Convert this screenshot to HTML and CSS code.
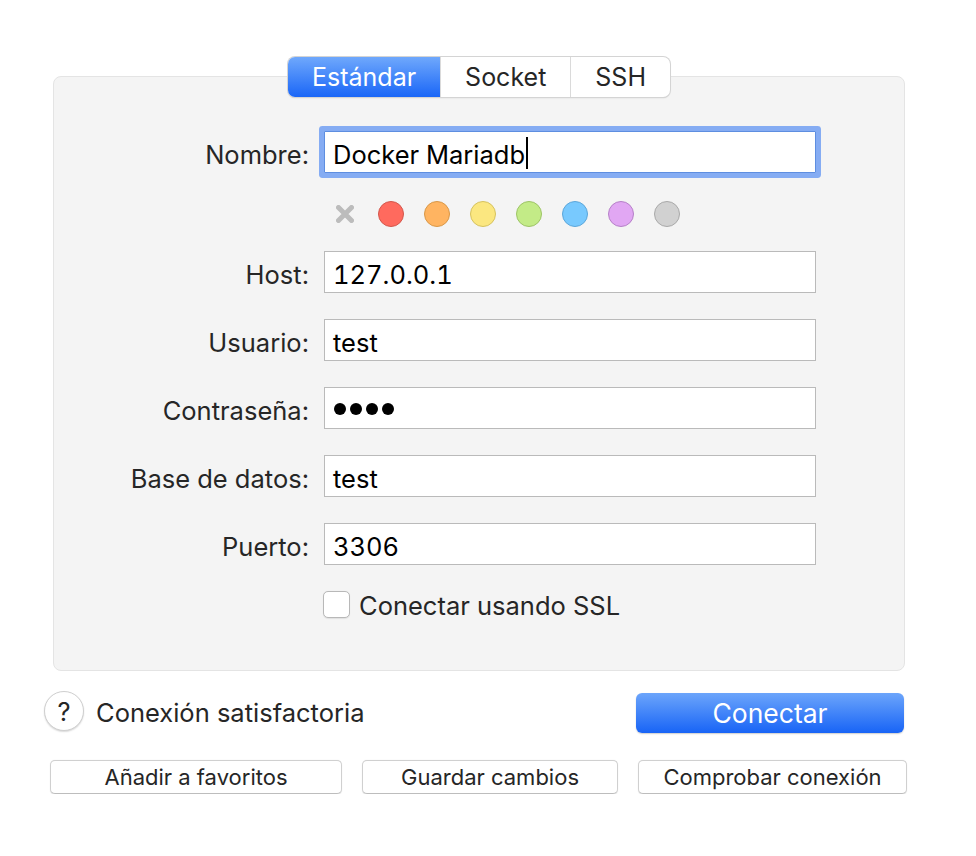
FILE: index.html
```html
<!DOCTYPE html>
<html lang="es">
<head>
<meta charset="utf-8">
<title>Conexión</title>
<link rel="stylesheet" href="styles.css">
</head>
<body>
<div class="window">
  <div class="tabs">
    <div class="tab active">Estándar</div>
    <div class="tab">Socket</div>
    <div class="tab">SSH</div>
  </div>
  <div class="panel">
    <div class="form">
      <div class="label">Nombre:</div>
      <div class="field focused">Docker Mariadb<span class="caret"></span></div>

      <div class="colors">
        <svg class="clear" width="18" height="18" viewBox="0 0 18 18"><path d="M2.5 2.5 L15.5 15.5 M15.5 2.5 L2.5 15.5" stroke="#bcbcbc" stroke-width="5" stroke-linecap="round"/></svg>
        <span class="swatch red"></span>
        <span class="swatch orange"></span>
        <span class="swatch yellow"></span>
        <span class="swatch green"></span>
        <span class="swatch blue"></span>
        <span class="swatch purple"></span>
        <span class="swatch gray"></span>
      </div>

      <div class="label">Host:</div>
      <div class="field">127.0.0.1</div>

      <div class="label">Usuario:</div>
      <div class="field">test</div>

      <div class="label">Contraseña:</div>
      <div class="field"><span class="dots"><span class="dot"></span><span class="dot"></span><span class="dot"></span><span class="dot"></span></span></div>

      <div class="label">Base de datos:</div>
      <div class="field">test</div>

      <div class="label">Puerto:</div>
      <div class="field">3306</div>

      <div class="check-row">
        <span class="checkbox"></span>
        <span class="check-label">Conectar usando SSL</span>
      </div>
    </div>
  </div>

  <div class="status-row">
    <div class="status">
      <span class="help">?</span>
      <span class="status-text">Conexión satisfactoria</span>
    </div>
    <div class="primary">Conectar</div>
  </div>

  <div class="button-row">
    <div class="button">Añadir a favoritos</div>
    <div class="button">Guardar cambios</div>
    <div class="button">Comprobar conexión</div>
  </div>
</div>
</body>
</html>
```

FILE: styles.css
```css
html, body {
  margin: 0;
  padding: 0;
  background: #ffffff;
}

body {
  font-family: Inter, "Liberation Sans", sans-serif;
  color: #262626;
}

.window {
  width: 870px;
  margin-left: 44px;
  padding-top: 57px;
  display: flex;
  flex-direction: column;
}

/* segmented control */
.tabs {
  align-self: center;
  display: flex;
  height: 40px;
  border-radius: 7px;
  background: #ffffff;
  box-shadow: 0 0 0 1px #d4d4d4, 0 1px 1.5px rgba(0, 0, 0, 0.18);
  position: relative;
  z-index: 1;
  overflow: hidden;
}

.tab {
  display: flex;
  align-items: center;
  justify-content: center;
  padding: 0 24px;
  font-size: 25px;
  color: #262626;
  border-left: 1px solid #dadada;
}

.tab:first-child {
  border-left: none;
}

.tab.active {
  background: linear-gradient(#6fa8fc, #1a66f7);
  color: #ffffff;
}

/* panel */
.panel {
  margin: -21px 9px 0 9px;
  background: #f4f4f4;
  border: 1px solid #e4e4e4;
  border-radius: 8px;
  padding: 54px 0 52px 0;
}

.form {
  display: grid;
  grid-template-columns: 255px 492px;
  column-gap: 15px;
  row-gap: 26px;
  align-items: center;
}

.label {
  text-align: right;
  font-size: 25.5px;
  line-height: 30px;
  padding-top: 6px;
  color: #262626;
}

.field {
  height: 42px;
  box-sizing: border-box;
  background: #ffffff;
  border: 1px solid #bababa;
  padding: 5px 8px 0 8px;
  display: flex;
  align-items: center;
  font-size: 25.5px;
  color: #000000;
  font-variant-numeric: tabular-nums;
}

.field.focused {
  border-color: #5e8ee0;
  border-radius: 1px;
  box-shadow: 0 0 0 5px #85acf3;
}

.caret {
  display: inline-block;
  width: 2px;
  height: 32px;
  background: #000000;
  margin: -4px 0 0 1px;
}

.dots {
  display: flex;
  gap: 4px;
  padding-left: 1px;
  margin-top: -4px;
}

.dot {
  width: 12px;
  height: 12px;
  border-radius: 50%;
  background: #000000;
}

/* colour labels */
.colors {
  grid-column: 2;
  display: flex;
  align-items: center;
  gap: 20px;
  height: 26px;
  padding-left: 12px;
  margin: 2px 0 -2px 0;
}

.clear {
  margin-right: 4px;
}

.swatch {
  width: 26px;
  height: 26px;
  box-sizing: border-box;
  border-radius: 50%;
  border: 1.5px solid;
}

.red { background: #ff6a5e; border-color: #d3564b; }
.orange { background: #ffb461; border-color: #d99746; }
.yellow { background: #fbe780; border-color: #d6c25e; }
.green { background: #c3eb87; border-color: #9dc466; }
.blue { background: #78c9fe; border-color: #5ba6da; }
.purple { background: #e1a7f3; border-color: #b680c8; }
.gray { background: #d1d1d1; border-color: #a9a9a9; }

.check-row {
  grid-column: 2;
  display: flex;
  align-items: center;
  gap: 9px;
  height: 27px;
  margin-left: -1px;
}

.checkbox {
  width: 27px;
  height: 27px;
  box-sizing: border-box;
  background: #ffffff;
  border: 1px solid #b8b8b8;
  border-radius: 5px;
  box-shadow: 0 0.5px 1px rgba(0, 0, 0, 0.08);
}

.check-label {
  font-size: 25.5px;
  line-height: 30px;
  padding-top: 3px;
  color: #262626;
}

/* status row */
.status-row {
  margin-top: 20px;
  height: 42px;
  display: flex;
  justify-content: space-between;
  align-items: flex-start;
  padding-right: 10px;
}

.status {
  display: flex;
  align-items: center;
  gap: 12px;
}

.help {
  width: 40px;
  height: 40px;
  box-sizing: border-box;
  border-radius: 50%;
  background: #ffffff;
  border: 1px solid #cfcfcf;
  box-shadow: 0 1px 1.5px rgba(0, 0, 0, 0.15);
  display: flex;
  align-items: center;
  justify-content: center;
  font-size: 25.5px;
  color: #262626;
}

.status-text {
  font-size: 25.5px;
  line-height: 30px;
  padding-top: 3px;
  color: #262626;
}

.primary {
  width: 268px;
  height: 40px;
  margin-top: 2px;
  border-radius: 6px;
  background: linear-gradient(#6ca5fb, #1864f6);
  box-shadow: 0 1px 1.5px rgba(0, 0, 0, 0.2);
  color: #ffffff;
  font-size: 26.5px;
  display: flex;
  align-items: center;
  justify-content: center;
}

/* bottom buttons */
.button-row {
  margin-top: 27px;
  margin-left: 6px;
  display: grid;
  grid-template-columns: 292px 256px 269px;
  column-gap: 20px;
}

.button {
  height: 34px;
  box-sizing: border-box;
  background: #ffffff;
  border: 1px solid #d0d0d0;
  border-bottom-color: #bdbdbd;
  border-radius: 5px;
  box-shadow: 0 0.5px 1px rgba(0, 0, 0, 0.12);
  display: flex;
  align-items: center;
  justify-content: center;
  font-size: 22px;
  color: #262626;
}
```
